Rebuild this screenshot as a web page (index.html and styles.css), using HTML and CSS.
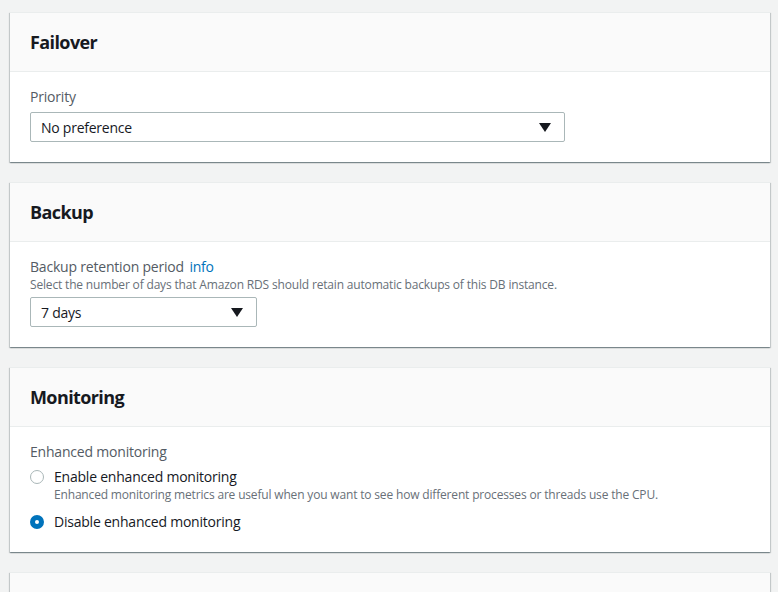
FILE: index.html
```html
<!DOCTYPE html>
<html>
<head>
<meta charset="utf-8">
<link rel="stylesheet" href="styles.css">
</head>
<body>
<div class="page">
  <section class="card">
    <div class="card-header"><h2>Failover</h2></div>
    <div class="card-body">
      <div class="label">Priority</div>
      <div class="select wide"><span>No preference</span><span class="caret"></span></div>
    </div>
  </section>

  <section class="card">
    <div class="card-header"><h2>Backup</h2></div>
    <div class="card-body">
      <div class="label">Backup retention period <a class="info">info</a></div>
      <div class="desc">Select the number of days that Amazon RDS should retain automatic backups of this DB instance.</div>
      <div class="select narrow"><span>7 days</span><span class="caret"></span></div>
    </div>
  </section>

  <section class="card">
    <div class="card-header"><h2>Monitoring</h2></div>
    <div class="card-body">
      <div class="label">Enhanced monitoring</div>
      <div class="radio-row first">
        <span class="radio"></span>
        <div>
          <div class="radio-label">Enable enhanced monitoring</div>
          <div class="desc">Enhanced monitoring metrics are useful when you want to see how different processes or threads use the CPU.</div>
        </div>
      </div>
      <div class="radio-row second">
        <span class="radio checked"></span>
        <div>
          <div class="radio-label">Disable enhanced monitoring</div>
        </div>
      </div>
    </div>
  </section>

  <section class="card">
    <div class="card-header"><h2>&nbsp;</h2></div>
  </section>
</div>
</body>
</html>
```

FILE: styles.css
```css
html, body {
  margin: 0;
  padding: 0;
  background: #f2f3f3;
  height: 100%;
  overflow: hidden;
}
body {
  font-family: "Open Sans", "Noto Sans", sans-serif;
  color: #16191f;
}
.page {
  display: flex;
  flex-direction: column;
  gap: 20px;
  padding: 12px 8px 0 10px;
}
.card {
  background: #fff;
  box-shadow: 0 1px 1px 0 rgba(0, 28, 36, 0.3), 1px 1px 1px 0 rgba(0, 28, 36, 0.15), -1px 1px 1px 0 rgba(0, 28, 36, 0.15);
  border-top: 1px solid #eaeded;
}
.card-header {
  background: #fafafa;
  border-bottom: 1px solid #eaeded;
  height: 58px;
  display: flex;
  align-items: center;
  padding: 0 20px;
}
.card-header h2 {
  margin: 0;
  font-size: 18px;
  font-weight: 700;
  color: #16191f;
  letter-spacing: -0.6px;
}
.card-body {
  padding: 15px 20px 20px;
}
.label {
  font-size: 14px;
  line-height: 20px;
  color: #545b64;
  letter-spacing: -0.2px;
}
.info {
  color: #0073bb;
  margin-left: 2px;
}
.desc {
  font-size: 12px;
  line-height: 16px;
  color: #687078;
  letter-spacing: -0.17px;
}
.select {
  margin-top: 5px;
  height: 28px;
  border: 1px solid #aab7b8;
  border-radius: 2px;
  display: flex;
  align-items: center;
  justify-content: space-between;
  padding: 0 13px 0 10px;
  font-size: 14px;
  color: #16191f;
  letter-spacing: -0.25px;
}
.select.wide { width: 510px; }
.select.narrow { width: 202px; margin-top: 4px; }
.caret {
  width: 0;
  height: 0;
  border-left: 6px solid transparent;
  border-right: 6px solid transparent;
  border-top: 9px solid #16191f;
}
.radio-row {
  display: flex;
  align-items: flex-start;
  gap: 10px;
}
.radio-row.first { margin-top: 5px; }
.radio-row.second { margin-top: 9px; }
.radio {
  width: 12px;
  height: 12px;
  border: 1px solid #aab7b8;
  border-radius: 50%;
  margin-top: 3px;
  flex: none;
  background: #fff;
}
.radio.checked {
  width: 4px;
  height: 4px;
  border: 5px solid #0073bb;
}
.radio-label {
  font-size: 14px;
  line-height: 20px;
  color: #16191f;
  letter-spacing: -0.22px;
}
```
